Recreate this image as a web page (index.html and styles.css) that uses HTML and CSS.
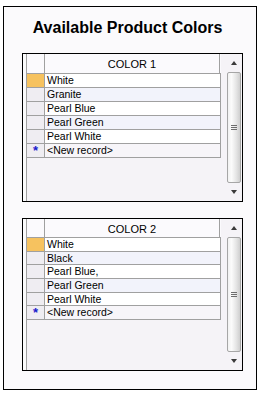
FILE: index.html
```html
<!DOCTYPE html>
<html>
<head>
<meta charset="utf-8">
<link rel="stylesheet" href="styles.css">
</head>
<body>
<div class="frame">
  <h1 class="title">Available Product Colors</h1>

  <div class="grid grid-1">
    <div class="edge"></div>
    <div class="table">
      <div class="hdr"><div class="sel-h"></div><div class="col-h">COLOR 1</div></div>
      <div class="row current"><div class="sel"></div><div class="cell">White</div></div>
      <div class="row alt"><div class="sel"></div><div class="cell">Granite</div></div>
      <div class="row"><div class="sel"></div><div class="cell">Pearl Blue</div></div>
      <div class="row alt"><div class="sel"></div><div class="cell">Pearl Green</div></div>
      <div class="row"><div class="sel"></div><div class="cell">Pearl White</div></div>
      <div class="row newrec"><div class="sel"><span class="star">*</span></div><div class="cell">&lt;New record&gt;</div></div>
    </div>
    <div class="gap"></div>
    <div class="sb">
      <div class="sb-btn"><span class="tri-up"></span></div>
      <div class="thumb"><span class="grip"></span></div>
      <div class="sb-btn"><span class="tri-down"></span></div>
    </div>
  </div>

  <div class="grid grid-2">
    <div class="edge"></div>
    <div class="table">
      <div class="hdr"><div class="sel-h"></div><div class="col-h">COLOR 2</div></div>
      <div class="row current"><div class="sel"></div><div class="cell">White</div></div>
      <div class="row alt"><div class="sel"></div><div class="cell">Black</div></div>
      <div class="row"><div class="sel"></div><div class="cell">Pearl Blue,</div></div>
      <div class="row alt"><div class="sel"></div><div class="cell">Pearl Green</div></div>
      <div class="row"><div class="sel"></div><div class="cell">Pearl White</div></div>
      <div class="row newrec"><div class="sel"><span class="star">*</span></div><div class="cell">&lt;New record&gt;</div></div>
    </div>
    <div class="gap"></div>
    <div class="sb">
      <div class="sb-btn"><span class="tri-up"></span></div>
      <div class="thumb"><span class="grip"></span></div>
      <div class="sb-btn"><span class="tri-down"></span></div>
    </div>
  </div>
</div>
</body>
</html>
```

FILE: styles.css
```css
body {
  margin: 0;
  background: #ffffff;
  font-family: "Liberation Sans", Arial, sans-serif;
  color: #000;
}

.frame {
  margin: 6px 0 0 3px;
  width: 254px;
  height: 384px;
  box-sizing: border-box;
  border: 1px solid #000;
  background: #fbfafc;
  padding: 12px 13px 0 18px;
  display: flex;
  flex-direction: column;
}

.title {
  margin: 0 -8px 16px -18px;
  font-size: 16px;
  line-height: 18px;
  font-weight: bold;
  text-align: center;
}

.grid {
  display: flex;
  flex-shrink: 0;
  box-sizing: border-box;
  border: 1px solid #000;
  background: #f5f3f7;
}

.grid-1 { height: 149px; }
.grid-2 { height: 153px; margin-top: 16px; }

.edge {
  width: 3px;
  border-right: 1px solid #a0a0a0;
  background: #fbfbfc;
}

.table {
  width: 194px;
  display: flex;
  flex-direction: column;
}

.hdr {
  display: flex;
  height: 19px;
  flex-shrink: 0;
  background: #fbfafd;
  border-bottom: 1px solid #a0a0a0;
}

.grid-2 .hdr { height: 18px; }

.sel-h {
  width: 17px;
  border-right: 1px solid #a0a0a0;
}

.col-h {
  width: 175px;
  border-right: 1px solid #a0a0a0;
  text-align: center;
  font-size: 11px;
  line-height: 15px;
  padding-top: 3px;
  box-sizing: border-box;
}

.row {
  display: flex;
  flex-shrink: 0;
  height: 13px;
  border-bottom: 1px solid #a0a0a0;
  background: #ffffff;
}

.grid-2 .row { height: 12.67px; }

.row.alt { background: #f2f3fb; }
.row.newrec { background: #f7f5f9; }

.sel {
  width: 17px;
  border-right: 1px solid #a0a0a0;
  background: #efedf2;
  display: flex;
  justify-content: center;
}

.current .sel { background: #f6c25f; }

.star {
  color: #1a1acc;
  font-weight: bold;
  font-size: 13px;
  line-height: 14px;
}

.cell {
  width: 173px;
  padding-left: 2px;
  border-right: 1px solid #a0a0a0;
  font-size: 10.5px;
  line-height: 13px;
  white-space: nowrap;
  overflow: hidden;
}

.gap { width: 4px; }

.sb {
  width: 17px;
  display: flex;
  flex-direction: column;
}

.sb-btn {
  height: 18px;
  flex-shrink: 0;
  display: flex;
  align-items: center;
  justify-content: center;
}

.tri-up {
  width: 0;
  height: 0;
  border-left: 3px solid transparent;
  border-right: 3px solid transparent;
  border-bottom: 4px solid #3a3a3a;
}

.tri-down {
  width: 0;
  height: 0;
  border-left: 3px solid transparent;
  border-right: 3px solid transparent;
  border-top: 4px solid #3a3a3a;
}

.thumb {
  flex: 1;
  margin: 0 1px 0 2px;
  border: 1px solid #a6a6a6;
  border-radius: 2px;
  background: linear-gradient(to right, #f2f2f2, #fbfbfb 30%, #e4e4e4 70%, #cfcfcf);
  display: flex;
  align-items: center;
  justify-content: center;
}

.grip {
  width: 6px;
  height: 5px;
  background: repeating-linear-gradient(to bottom, #6e6e6e 0 1px, transparent 1px 2px);
}
```
